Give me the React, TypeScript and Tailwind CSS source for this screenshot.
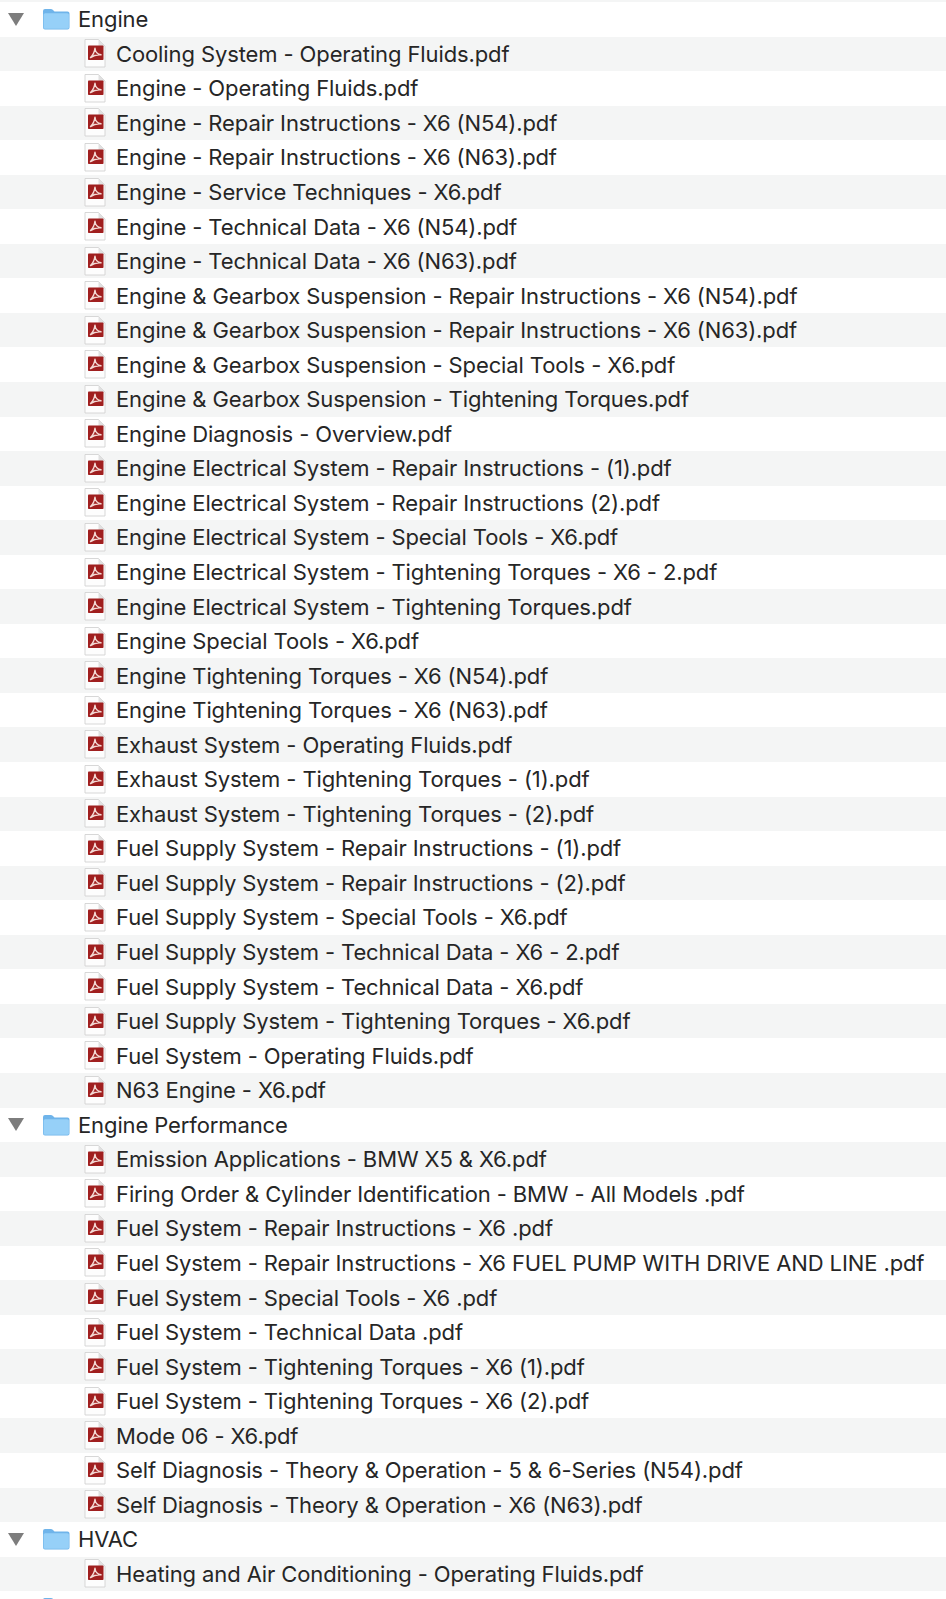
const tree: { folder?: string; name: string }[] = [
  { folder: 'Engine', name: '' },
  ...[
    'Cooling System - Operating Fluids.pdf',
    'Engine - Operating Fluids.pdf',
    'Engine - Repair Instructions - X6 (N54).pdf',
    'Engine - Repair Instructions - X6 (N63).pdf',
    'Engine - Service Techniques - X6.pdf',
    'Engine - Technical Data - X6 (N54).pdf',
    'Engine - Technical Data - X6 (N63).pdf',
    'Engine & Gearbox Suspension - Repair Instructions - X6 (N54).pdf',
    'Engine & Gearbox Suspension - Repair Instructions - X6 (N63).pdf',
    'Engine & Gearbox Suspension - Special Tools - X6.pdf',
    'Engine & Gearbox Suspension - Tightening Torques.pdf',
    'Engine Diagnosis - Overview.pdf',
    'Engine Electrical System - Repair Instructions - (1).pdf',
    'Engine Electrical System - Repair Instructions (2).pdf',
    'Engine Electrical System - Special Tools - X6.pdf',
    'Engine Electrical System - Tightening Torques - X6 - 2.pdf',
    'Engine Electrical System - Tightening Torques.pdf',
    'Engine Special Tools - X6.pdf',
    'Engine Tightening Torques - X6 (N54).pdf',
    'Engine Tightening Torques - X6 (N63).pdf',
    'Exhaust System - Operating Fluids.pdf',
    'Exhaust System - Tightening Torques - (1).pdf',
    'Exhaust System - Tightening Torques - (2).pdf',
    'Fuel Supply System - Repair Instructions - (1).pdf',
    'Fuel Supply System - Repair Instructions - (2).pdf',
    'Fuel Supply System - Special Tools - X6.pdf',
    'Fuel Supply System - Technical Data - X6 - 2.pdf',
    'Fuel Supply System - Technical Data - X6.pdf',
    'Fuel Supply System - Tightening Torques - X6.pdf',
    'Fuel System - Operating Fluids.pdf',
    'N63 Engine - X6.pdf',
  ].map((name) => ({ name })),
  { folder: 'Engine Performance', name: '' },
  ...[
    'Emission Applications - BMW X5 & X6.pdf',
    'Firing Order & Cylinder Identification - BMW - All Models .pdf',
    'Fuel System - Repair Instructions - X6 .pdf',
    'Fuel System - Repair Instructions - X6 FUEL PUMP WITH DRIVE AND LINE .pdf',
    'Fuel System - Special Tools - X6 .pdf',
    'Fuel System - Technical Data .pdf',
    'Fuel System - Tightening Torques - X6 (1).pdf',
    'Fuel System - Tightening Torques - X6 (2).pdf',
    'Mode 06 - X6.pdf',
    'Self Diagnosis - Theory & Operation - 5 & 6-Series (N54).pdf',
    'Self Diagnosis - Theory & Operation - X6 (N63).pdf',
  ].map((name) => ({ name })),
  { folder: 'HVAC', name: '' },
  { name: 'Heating and Air Conditioning - Operating Fluids.pdf' },
  { folder: '', name: '' },
];

function FolderIcon() {
  return (
    <svg width="28" height="22" viewBox="0 0 28 22" className="shrink-0">
      <path d="M1 3 Q1 1 3 1 H9 Q10.5 1 11.5 2.5 L12.5 3.5 H25.5 Q27.5 3.5 27.5 5.5 V19.5 Q27.5 21.5 25.5 21.5 H3 Q1 21.5 1 19.5 Z" fill="#6fb4ea" />
      <path d="M1.6 6.8 Q1.6 5.2 3.2 5.2 H25.2 Q26.9 5.2 26.9 6.8 V19.4 Q26.9 20.8 25.2 20.8 H3.2 Q1.6 20.8 1.6 19.4 Z" fill="#96d0f8" />
    </svg>
  );
}

function PdfIcon() {
  return (
    <svg width="22" height="29" viewBox="0 0 22 29" className="shrink-0">
      <path d="M1 0.5 H14.5 L21 7 V28 H1 Z" fill="#fdfdfd" stroke="#d2d2d2" strokeWidth="0.9" />
      <path d="M14.5 0.5 V7 H21 Z" fill="#e0e0e0" />
      <rect x="4" y="6.5" width="15.5" height="14.5" rx="0.8" fill="#a01f1f" />
      <path d="M6.5 18.6 C8.5 16.8 10.4 13.4 11 9.2 C11.3 12.8 13 15.2 17 15.8 C13.5 15.4 9.8 16.2 6.5 18.6 Z" fill="none" stroke="#f4d9d4" strokeWidth="1.4" strokeLinejoin="round" />
    </svg>
  );
}

export default function App() {
  return (
    <div className="h-[1599px] overflow-hidden bg-[#f4f5f5] pt-[2px] font-['Inter',sans-serif] text-[22px] tracking-[-0.11px] text-[#262626]">
      {tree.map((row, i) => (
        <div key={i} className={i % 2 === 0 ? 'flex h-[34.55px] items-center bg-white' : 'flex h-[34.55px] items-center bg-[#f4f5f5]'}>
          {row.folder !== undefined ? (
            <>
              <div className="ml-[8px] h-0 w-0 border-x-[8px] border-t-[13px] border-x-transparent border-t-[#7d7d7d]" />
              <div className="ml-[18px]">
                <FolderIcon />
              </div>
              <span className="ml-[8px] mt-[1px] whitespace-pre">{row.folder}</span>
            </>
          ) : (
            <>
              <div className="ml-[84px]">
                <PdfIcon />
              </div>
              <span className="ml-[10px] mt-[1px] whitespace-pre">{row.name}</span>
            </>
          )}
        </div>
      ))}
    </div>
  );
}
